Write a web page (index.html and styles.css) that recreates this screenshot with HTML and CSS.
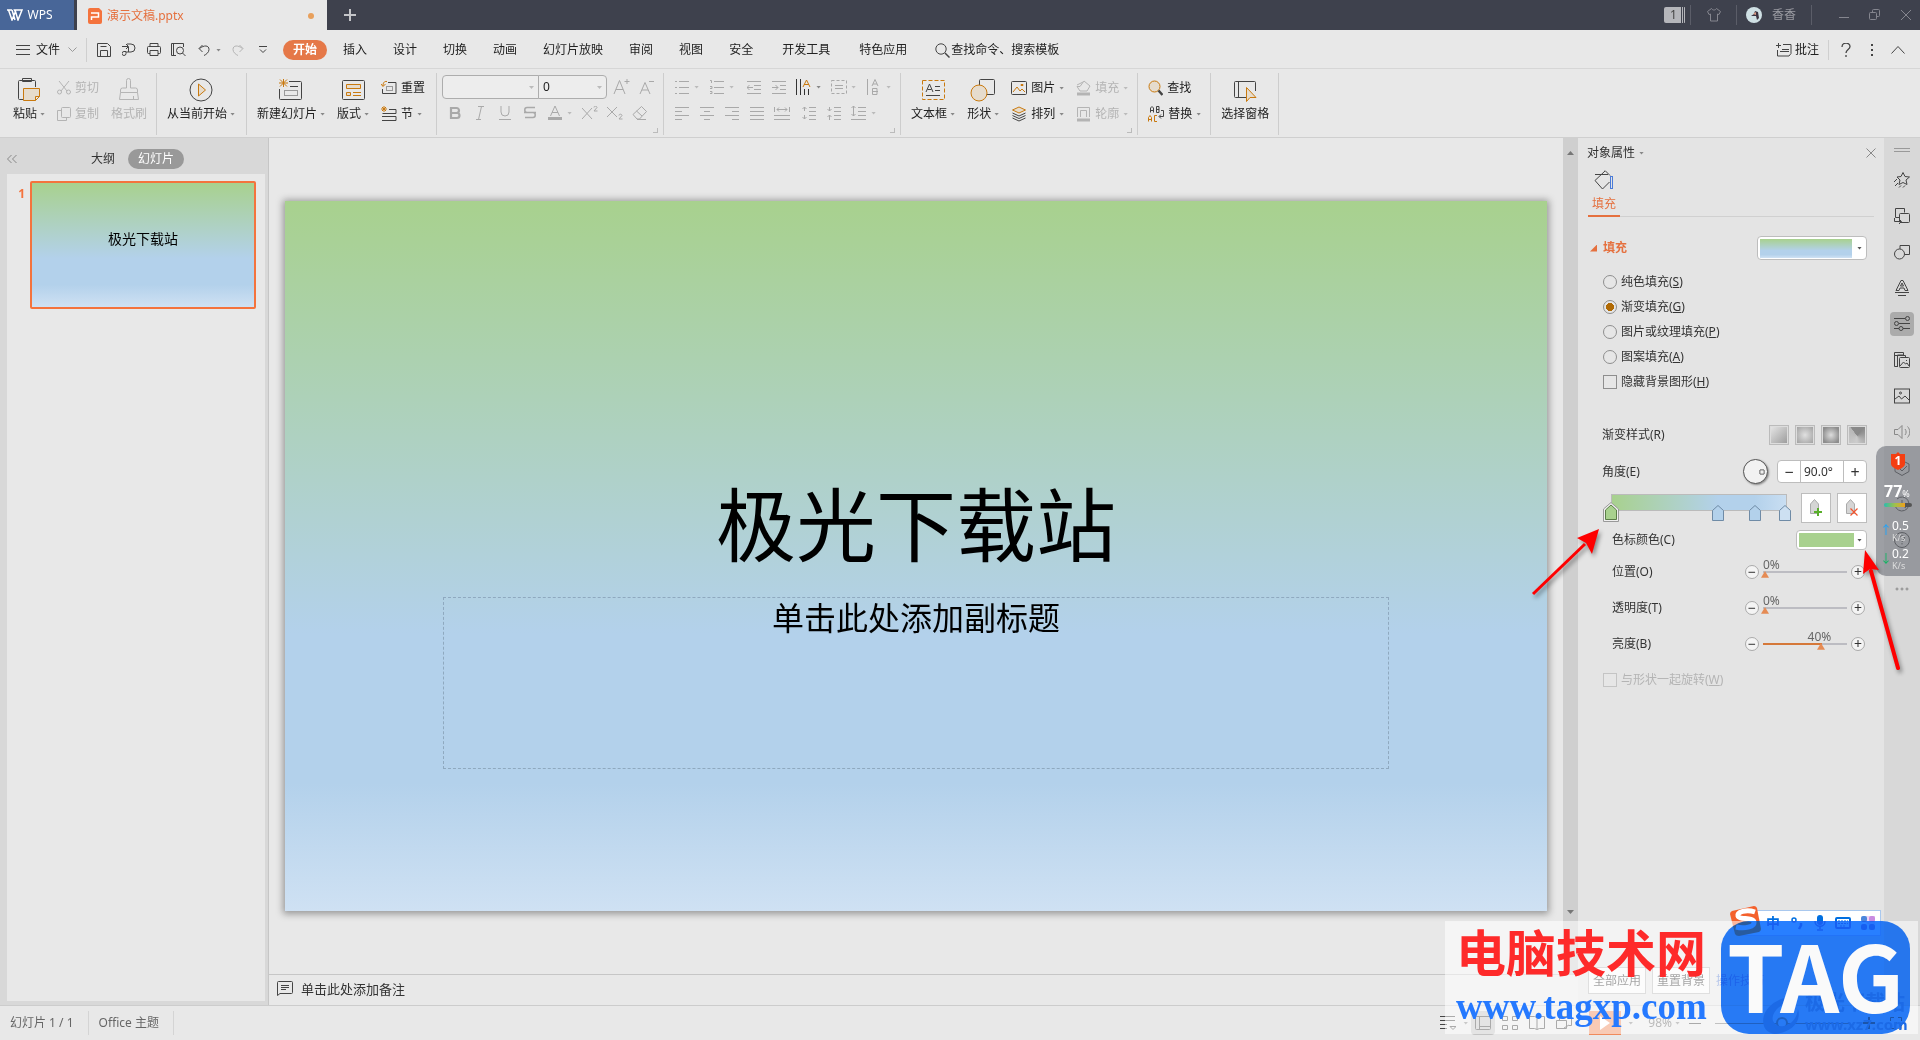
FILE: index.html
```html
<!DOCTYPE html>
<html lang="zh-CN">
<head>
  <meta charset="UTF-8">
  <meta name="viewport" content="width=device-width, initial-scale=1.0">
  <title>演示文稿.pptx - WPS</title>
  <link rel="stylesheet" href="styles.css">
</head>
<body>

  <!-- Title bar -->
  <header class="titlebar">
    <button class="wps-tab">
      <svg width="16" height="12" viewBox="0 0 16 12"><path d="M0 1h5M1.500 1l3.500 10L8.500 2.500 11 11l4-10h-7.500l1 2M5 1l3 10" stroke="#fff" stroke-width="1.500"/></svg>
      WPS
    </button>
    <div class="doc-tab">
      <svg width="14" height="16" viewBox="0 0 14 16"><path d="M2 0h9l3 3v11a2 2 0 0 1-2 2H2a2 2 0 0 1-2-2V2a2 2 0 0 1 2-2z" fill="#f4733d"/><path d="M3 5h7.500v4H3.500v3" stroke="#fff" stroke-width="1.500"/></svg>
      <span>演示文稿.pptx</span>
      <i class="unsaved"></i>
    </div>
    <button class="new-tab" aria-label="新建"><svg width="12" height="12" viewBox="0 0 12 12"><path d="M6 0v12M0 6h12" stroke="#c4c5c9" stroke-width="2"/></svg></button>
    <div class="title-tools">
      <span class="badge">1</span>
      <span class="t-sep"></span>
      <button aria-label="皮肤"><svg width="14" height="14" viewBox="0 0 14 14"><path d="M4.500.500L.500 3.500l1.500 3 1.500-.5v7h7V6l1.500.500 1.500-3-4-3c-1 2-4 2-5 0z"/></svg></button>
      <span class="t-sep"></span>
      <button class="user">
        <svg width="16" height="16" viewBox="0 0 16 16"><circle cx="8" cy="8" r="8" fill="#cfe0e4"/><path d="M9 4l3 1 1 6-2 2-1-4-5 0 3-2z" fill="#3b3340"/><path d="M7 7l3-2v3z" fill="#d99a84"/></svg>
        香香
      </button>
      <span class="t-sep"></span>
      <button class="win" aria-label="最小化"><svg width="12" height="12" viewBox="0 0 12 12"><path d="M1 8.500h10"/></svg></button>
      <button class="win" aria-label="还原"><svg width="12" height="12" viewBox="0 0 12 12"><rect x=".5" y="3.500" width="7" height="7" rx="1"/><path d="M3.500 3V1.500a1 1 0 0 1 1-1h5a1 1 0 0 1 1 1v5a1 1 0 0 1-1 1H8"/></svg></button>
      <button class="win" aria-label="关闭"><svg width="12" height="12" viewBox="0 0 12 12"><path d="M1 1l10 10M11 1L1 11"/></svg></button>
    </div>
  </header>

  <!-- Menu -->
  <nav class="menubar">
    <button class="file-btn">
      <svg width="14" height="10" viewBox="0 0 14 10"><path d="M0 .5h14M0 4.500h14M0 9.500h14"/></svg>
      文件
      <svg class="chev" width="9" height="6" viewBox="0 0 9 6"><path d="M.5.500l4 4 4-4"/></svg>
    </button>
    <span class="m-sep"></span>
    <div class="quick">
      <button aria-label="保存"><svg width="14" height="14" viewBox="0 0 14 14"><path d="M.5.500h10l3 3v10H.500zM3.500 13V7.500h7V13M3.500 3.500h6"/></svg></button>
      <button aria-label="输出"><svg width="14" height="14" viewBox="0 0 14 14"><path d="M0 3.500h6M4 1l2.500 2.500L4 6M5 1h4a4 4 0 0 1 0 8H4v1.500a2 2 0 1 1-2-2h2M6.500 4v5"/></svg></button>
      <button aria-label="打印"><svg width="14" height="14" viewBox="0 0 14 14"><path d="M3 3.500v-3h8v3M3 10.500H1.500a1 1 0 0 1-1-1v-5a1 1 0 0 1 1-1h11a1 1 0 0 1 1 1v5a1 1 0 0 1-1 1H11M3 7.500h8v5H3z"/></svg></button>
      <button aria-label="打印预览"><svg width="15" height="14" viewBox="0 0 15 14"><path d="M5 12.500H.500V.500h12V4M2.500.500v12"/><circle cx="9" cy="7.500" r="3.500"/><path d="M11.500 10l3 3"/></svg></button>
      <button aria-label="撤消"><svg width="12" height="12" viewBox="0 0 12 12"><path d="M4.500 1L1 4.500 4.500 8M1.500 4.500C6 1 11 1 11 5.500c0 3-3 5-5 6"/></svg></button>
      <i class="caret"></i>
      <button class="off" aria-label="恢复"><svg width="12" height="12" viewBox="0 0 12 12"><path d="M7.500 1L11 4.500 7.500 8M10.500 4.500C6 1 1 1 1 5.500c0 3 3 5 5 6"/></svg></button>
      <button aria-label="更多"><svg width="8" height="8" viewBox="0 0 8 8"><path d="M0 .5h8M1 3.500l3 3 3-3"/></svg></button>
    </div>
    <div class="tabs">
      <button class="active">开始</button>
      <button>插入</button>
      <button>设计</button>
      <button>切换</button>
      <button>动画</button>
      <button>幻灯片放映</button>
      <button>审阅</button>
      <button>视图</button>
      <button>安全</button>
      <button class="wide">开发工具</button>
      <button class="wide">特色应用</button>
    </div>
    <button class="search"><svg width="15" height="15" viewBox="0 0 15 15"><circle cx="6" cy="6" r="5.200"/><path d="M10 10l4.500 4.500" stroke-width="1.500"/></svg>查找命令、搜索模板</button>
    <div class="menu-right">
      <button class="comment"><svg width="16" height="14" viewBox="0 0 16 14"><path d="M2.500 0v5M0 2.500h5M7 1.500h8v9l-2 2.500H1.500V7M4 8.500h9M6 6.500h7"/></svg>批注</button>
      <span class="m-sep short"></span>
      <button aria-label="帮助"><svg width="10" height="14" viewBox="0 0 10 14"><path d="M1 4c0-5 8-5 8-.5C9 6.500 5 6.500 5 10M5 12v2" stroke-width="1.300"/></svg></button>
      <button aria-label="更多"><svg width="2" height="12" viewBox="0 0 2 12"><path d="M1 0v2M1 5v2M1 10v2" stroke-width="2"/></svg></button>
      <button aria-label="折叠"><svg width="14" height="8" viewBox="0 0 14 8"><path d="M.5 7.500l6.500-7 6.500 7"/></svg></button>
    </div>
  </nav>

  <!-- Ribbon -->
  <section class="ribbon">
    <div class="group first">
      <button class="big">
        <svg width="24" height="24" viewBox="0 0 24 24"><path d="M7 21.500H2.500a1 1 0 0 1-1-1v-17a1 1 0 0 1 1-1h15a1 1 0 0 1 1 1V9M5.500.500h9v3h-9z"/><path class="o" d="M6.500 10.500h16v8l-4 4h-12zM22.500 18.500h-4v4"/></svg>
        <span>粘贴<i class="caret"></i></span>
      </button>
      <div class="stack">
        <button class="off"><svg width="14" height="14" viewBox="0 0 14 14"><path d="M2 0l8 10M12 0L4 10"/><circle cx="2.500" cy="11" r="2"/><circle cx="11.500" cy="11" r="2"/></svg>剪切</button>
        <button class="off"><svg width="14" height="14" viewBox="0 0 14 14"><path d="M9.500 10.500v3h-9v-10H4"/><rect x="4.500" y=".5" width="9" height="10" rx="1"/></svg>复制</button>
      </div>
      <button class="big off">
        <svg width="24" height="24" viewBox="0 0 24 24"><path d="M9.500 10V2.500a2 2 0 0 1 4 0V10h5a2 2 0 0 1 2 2v2.500h-17V12a2 2 0 0 1 2-2zM3.500 14.500l-1 7h19l-1-7M16.500 18v3"/></svg>
        <span>格式刷</span>
      </button>
    </div>
    <div class="group roomy">
      <button class="big">
        <svg width="24" height="24" viewBox="0 0 24 24"><circle cx="12" cy="12" r="11"/><path class="o" d="M9.500 6v12l7-6z"/></svg>
        <span>从当前开始<i class="caret"></i></span>
      </button>
    </div>
    <div class="group roomy">
      <button class="big">
        <svg width="26" height="24" viewBox="0 0 26 24"><path d="M11 3.500h11.500a1 1 0 0 1 1 1v16a1 1 0 0 1-1 1h-20a1 1 0 0 1-1-1V11M12 8.500h8"/><rect class="g" x="6.500" y="12.500" width="13" height="5"/><path class="l" d="M5.500 1v8M1 5h9M2 1.500l7 7M9 1.500l-7 7"/></svg>
        <span>新建幻灯片<i class="caret"></i></span>
      </button>
      <button class="big">
        <svg width="24" height="24" viewBox="0 0 24 24"><rect x="1.500" y="2.500" width="22" height="19" rx="1"/><path class="o" d="M5.500 6.500h14v4h-14zM5.500 14.500h4v3h-4z"/><path class="l" d="M12 14.500h8M12 17.500h8"/></svg>
        <span>版式<i class="caret"></i></span>
      </button>
      <div class="stack">
        <button><svg width="16" height="16" viewBox="0 0 16 16"><path d="M7 2.500h8v11H1.500V9"/><rect class="g" x="5.500" y="6.500" width="6" height="4"/><path class="l" d="M6 1.500C3 1 2 3 2 6M0 4l2 2.500L4.500 4"/></svg>重置</button>
        <button><svg width="16" height="16" viewBox="0 0 16 16"><path d="M8 3.500h7v4H1.500M1 10.500h14v4H1"/><path class="l" d="M3 0v6M0 3h6M1 1l4 4M5 1L1 5"/></svg>节<i class="caret far"></i></button>
      </div>
    </div>
    <div class="group font-group">
      <div class="tool-row">
        <select class="font-name" aria-label="字体"><option></option></select>
        <select class="font-size" aria-label="字号"><option>0</option></select>
        <button class="t-btn" aria-label="增大字号"><svg width="17" height="16" viewBox="0 0 17 16"><path d="M1 15L6.500 1.500 12 15M3 10.500h7M14 0v5M11.500 2.500h5"/></svg></button>
        <button class="t-btn" aria-label="减小字号"><svg width="17" height="16" viewBox="0 0 17 16"><path d="M2 15L7 3.500 12 15M4 11h6M11 2.500h5"/></svg></button>
      </div>
      <div class="tool-row">
        <button class="t-btn" aria-label="加粗"><svg width="12" height="14" viewBox="0 0 12 14"><path d="M2 2h5.500a2 2 0 0 1 0 5H2zM2 7h6a2.200 2.200 0 0 1 0 5H2z" stroke-width="2.200"/></svg></button>
        <button class="t-btn" aria-label="倾斜"><svg width="10" height="14" viewBox="0 0 10 14"><path d="M3 .5h6M1 13.500h5M6.500.500l-3 13"/></svg></button>
        <button class="t-btn" aria-label="下划线"><svg width="12" height="14" viewBox="0 0 12 14"><path d="M2 0v6a4 4 0 0 0 8 0V0M0 13.500h12"/></svg></button>
        <button class="t-btn" aria-label="删除线"><svg width="12" height="14" viewBox="0 0 12 14"><path d="M11 1.500H3C0 1.500 0 6.500 3 6.500h6c3 0 3 5 0 5H1M0 6.500h12" stroke-width="1.500"/></svg></button>
        <button class="t-btn" aria-label="字体颜色"><svg width="14" height="14" viewBox="0 0 14 14"><path d="M2.500 10L7 0l4.500 10M4 6.500h6"/><path d="M0 12.500h14" stroke-width="3"/></svg></button>
        <i class="caret pale"></i>
        <button class="t-btn" aria-label="上标"><svg width="16" height="14" viewBox="0 0 16 14"><path d="M0 2l10 11M10 2L0 13M12 1.500c0-2 3-1.500 3 0L12 5h3.500"/></svg></button>
        <button class="t-btn" aria-label="下标"><svg width="16" height="14" viewBox="0 0 16 14"><path d="M0 1l10 10M10 1L0 11M12 9.500c0-2 3-1.500 3 0L12 13h3.500"/></svg></button>
        <button class="t-btn" aria-label="清除格式"><svg width="16" height="14" viewBox="0 0 16 14"><path d="M1 8.500L9.500.500l5 5-7 7.500H5zM4.500 5l5.500 5M5 13.500h9"/></svg></button>
      </div>
      <i class="corner"></i>
    </div>
    <div class="group para-group">
      <div class="tool-row">
        <button class="t-btn" aria-label="项目符号"><svg width="14" height="14" viewBox="0 0 14 14"><path d="M4 1.500h10M4 7.500h10M4 13.500h10M0 1.500h2M0 7.500h2M0 13.500h2"/></svg></button><i class="caret pale"></i>
        <button class="t-btn" aria-label="编号"><svg width="14" height="14" viewBox="0 0 14 14"><path d="M4 1.500h10M4 7.500h10M4 13.500h10M0 .5h1.500V3M0 6.500h2v2H0M0 11.500h2v2H0"/></svg></button><i class="caret pale"></i>
        <button class="t-btn apart" aria-label="减少缩进"><svg width="14" height="14" viewBox="0 0 14 14"><path d="M0 1.500h14M7 5.500h7M7 9.500h7M0 13.500h14M0 7.500h6M2.500 5L0 7.500 2.500 10"/></svg></button>
        <button class="t-btn" aria-label="增加缩进"><svg width="14" height="14" viewBox="0 0 14 14"><path d="M0 1.500h14M8 5.500h6M8 9.500h6M0 13.500h14M0 7.500h6M3.500 5L6 7.500 3.500 10"/></svg></button>
        <button class="t-btn dark" aria-label="文字方向"><svg width="15" height="16" viewBox="0 0 15 16"><path d="M.5 0v16M4.500 0v16M8.500 10v6M12.500 10v6"/><path class="l" d="M7 8l3.500-7L14 8M8 5.500h5"/></svg></button><i class="caret"></i>
        <button class="t-btn" aria-label="对齐文本"><svg width="16" height="14" viewBox="0 0 16 14"><rect x=".5" y=".5" width="15" height="13" stroke-dasharray="3 2"/><path d="M4 5.500h8M4 8.500h8"/></svg></button><i class="caret pale"></i>
        <button class="t-btn" aria-label="分散文本"><svg width="13" height="16" viewBox="0 0 13 16"><path d="M.5 0v16M5 7l3-6.500L11 7M6 5h4M5.500 9.500H10v6H5.500zM5.500 12.500H11"/></svg></button><i class="caret pale"></i>
      </div>
      <div class="tool-row">
        <button class="t-btn" aria-label="左对齐"><svg width="14" height="14" viewBox="0 0 14 14"><path d="M0 1.500h14M0 5.500h7M0 9.500h14M0 13.500h7"/></svg></button>
        <button class="t-btn" aria-label="居中"><svg width="14" height="14" viewBox="0 0 14 14"><path d="M0 1.500h14M4 5.500h6M0 9.500h14M4 13.500h6"/></svg></button>
        <button class="t-btn" aria-label="右对齐"><svg width="14" height="14" viewBox="0 0 14 14"><path d="M0 1.500h14M7 5.500h7M0 9.500h14M7 13.500h7"/></svg></button>
        <button class="t-btn" aria-label="两端对齐"><svg width="14" height="14" viewBox="0 0 14 14"><path d="M0 1.500h14M0 5.500h14M0 9.500h14M0 13.500h14"/></svg></button>
        <button class="t-btn" aria-label="分散对齐"><svg width="16" height="14" viewBox="0 0 16 14"><path d="M.5 1v5M15.500 1v5M3 3.500h10M5 1.500l-2 2 2 2M11 1.500l2 2-2 2M0 9.500h16M0 13.500h16"/></svg></button>
        <button class="t-btn apart" aria-label="增加行距"><svg width="14" height="14" viewBox="0 0 14 14"><path d="M7 1.500h7M7 5.500h7M7 9.500h7M7 13.500h7M2.500 1v4M.5 3l2-2 2 2M2.500 9v4M.5 11l2 2 2-2"/></svg></button>
        <button class="t-btn" aria-label="减少行距"><svg width="14" height="14" viewBox="0 0 14 14"><path d="M7 1.500h7M7 5.500h7M7 9.500h7M7 13.500h7M2.500 1v4M.5 3l2 2 2-2M2.500 9v5M.5 11l2-2 2 2"/></svg></button>
        <button class="t-btn" aria-label="行距"><svg width="15" height="14" viewBox="0 0 15 14"><path d="M7 1.500h8M7 5.500h8M7 9.500h8M0 13.500h15M2.500 0v10M.5 2l2-2 2 2M.5 8l2 2 2-2"/></svg></button>
        <i class="caret pale"></i>
      </div>
      <i class="corner"></i>
    </div>
    <div class="group">
      <button class="big">
        <svg width="24" height="24" viewBox="0 0 24 24"><rect class="l" x="1.500" y="2.500" width="22" height="19" stroke-dasharray="4 2"/><path d="M5 14l3.500-8L12 14M6.500 11.500h4M14 8.500h5M14 12.500h5M5 17.500h14"/></svg>
        <span>文本框<i class="caret"></i></span>
      </button>
      <button class="big">
        <svg width="26" height="24" viewBox="0 0 26 24"><rect x="9.500" y="1.500" width="15" height="15" rx="1"/><circle class="o" cx="9" cy="15" r="8"/></svg>
        <span>形状<i class="caret"></i></span>
      </button>
      <div class="stack">
        <button><svg width="16" height="14" viewBox="0 0 16 14"><rect x=".5" y=".5" width="15" height="13" rx="1"/><path class="l" d="M2 11l4-5 3 4 2-2 3 3M10 4.500h2v-1h-2z"/></svg>图片<i class="caret"></i></button>
        <button><svg width="16" height="16" viewBox="0 0 16 16"><path d="M1.500 7L8 10l6.500-3M1.500 9.500L8 12.500l6.500-3M1.500 12L8 15l6.500-3"/><path class="o" d="M8 1L1.500 4 8 7l6.500-3z"/></svg>排列<i class="caret"></i></button>
      </div>
      <div class="stack">
        <button class="off"><svg width="15" height="16" viewBox="0 0 15 16"><path d="M8 1l6 5-3 5H4L1 6.500h3L8 1M1 5l6-3"/><path d="M1 14h13" stroke-width="3"/></svg>填充<i class="caret pale"></i></button>
        <button class="off"><svg width="15" height="16" viewBox="0 0 15 16"><path d="M1.500 11V1.500h12V11M4.500 11V4.500h6V11"/><path d="M1 14h13" stroke-width="3"/></svg>轮廓<i class="caret pale"></i></button>
      </div>
      <i class="corner"></i>
    </div>
    <div class="group">
      <div class="stack">
        <button><svg width="15" height="16" viewBox="0 0 15 16"><circle class="o" cx="6.500" cy="6.500" r="5.500"/><path d="M10.500 10.500l4 4.500" stroke-width="2.500"/></svg>查找</button>
        <button><svg width="16" height="16" viewBox="0 0 16 16"><path d="M2.500 6.500V2l1.500-1.500L5.500 2v4.500M2.500 4.500h3M8.500.500v6H11v-6zM8.500 3.500H11M13 4.500h2.500v6h-4M13 8.500l-2 2 2 2"/><path class="l" d="M.5 15.500v-4L2 9.500l1.500 2v4M.5 13.500h3M9 9.500H6.500v6H9"/></svg>替换<i class="caret"></i></button>
      </div>
    </div>
    <div class="group">
      <button class="big">
        <svg width="24" height="24" viewBox="0 0 24 24"><path d="M13 19.500H2.500a1 1 0 0 1-1-1v-14a1 1 0 0 1 1-1h19a1 1 0 0 1 1 1V13M5.500 4v15"/><path class="o" d="M13.500 9.500v14l3.500-4h6z"/></svg>
        <span>选择窗格</span>
      </button>
    </div>
  </section>

  <main class="workspace">
    <!-- Slide list -->
    <aside class="slides">
      <div class="slides-head">
        <button class="collapse" aria-label="收起"><svg width="10" height="10" viewBox="0 0 10 10"><path d="M4.500 1l-4 4 4 4M9.500 1l-4 4 4 4"/></svg></button>
        <button>大纲</button>
        <button class="current">幻灯片</button>
      </div>
      <ol class="slide-list">
        <li><b>1</b><div class="thumb gradient">极光下载站</div></li>
      </ol>
    </aside>

    <section class="editor">
      <div class="stage-row">
        <div class="stage">
          <article class="slide gradient">
            <h1>极光下载站</h1>
            <p>单击此处添加副标题</p>
          </article>
        </div>
        <div class="scrollbar"><i class="up"></i><i class="down"></i></div>
      </div>
      <div class="notes">
        <svg width="16" height="15" viewBox="0 0 16 15"><path d="M1.500.500h13a1 1 0 0 1 1 1v10a1 1 0 0 1-1 1H3l-2.500 2v-13a1 1 0 0 1 1-1zM4 4.500h8M4 6.500h8M4 8.500h5"/></svg>
        单击此处添加备注
      </div>
    </section>

    <!-- Object properties -->
    <aside class="props">
      <div class="props-head">
        <span>对象属性<i class="caret"></i></span>
        <button aria-label="关闭"><svg width="10" height="10" viewBox="0 0 10 10"><path d="M.5.500l9 9M9.500.500l-9 9"/></svg></button>
      </div>
      <div class="props-tabs">
        <button>
          <svg width="20" height="20" viewBox="0 0 20 20"><path d="M1 4.500h13M11 1L1 10.500 8.500 19l7-7M11 .5l5 5"/><rect x="16.500" y="6.500" width="2" height="12" stroke="#4a7bd8"/></svg>
          填充
        </button>
      </div>
      <div class="props-body">
        <div class="row head-row">
          <h2><i></i>填充</h2>
          <button class="swatch preset" aria-label="填充预设"><span class="gradient"></span><i class="caret"></i></button>
        </div>
        <div class="choices">
          <label><input type="radio" name="fill">纯色填充(<u>S</u>)</label>
          <label><input type="radio" name="fill" checked>渐变填充(<u>G</u>)</label>
          <label><input type="radio" name="fill">图片或纹理填充(<u>P</u>)</label>
          <label><input type="radio" name="fill">图案填充(<u>A</u>)</label>
          <label><input type="checkbox">隐藏背景图形(<u>H</u>)</label>
        </div>
        <div class="row style-row">
          <span>渐变样式(R)</span>
          <div class="styles">
            <button class="linear" aria-label="线性"></button>
            <button class="radial" aria-label="射线"></button>
            <button class="rect" aria-label="矩形"></button>
            <button class="path" aria-label="路径"></button>
          </div>
        </div>
        <div class="row angle-row">
          <label for="angle">角度(E)</label>
          <div class="angle">
            <span class="dial"></span>
            <div class="spin">
              <button aria-label="减小">−</button>
              <input id="angle" type="text" value="90.0°">
              <button aria-label="增大">+</button>
            </div>
          </div>
        </div>
        <div class="row stops-row">
          <div class="stops">
            <div class="bar"></div>
            <svg class="stop on" style="left: 0%" width="16" height="20" viewBox="0 0 16 20"><path d="M.5 19.500V7L8 .500 15.500 7v12.500z" fill="#f0f0f0" stroke="#999"/><path d="M2.500 17.500V8L8 3l5.500 5v9.500z" fill="#a8d18e" stroke="#5b7d48"/></svg>
            <svg class="stop" style="left: 61%" width="12" height="16" viewBox="0 0 12 16"><path d="M.5 15.500V5.500L6 .5l5.500 5v10z" fill="#b3d1eb" stroke="#6f8ba6"/></svg>
            <svg class="stop" style="left: 82%" width="12" height="16" viewBox="0 0 12 16"><path d="M.5 15.500V5.500L6 .5l5.500 5v10z" fill="#b3d1eb" stroke="#6f8ba6"/></svg>
            <svg class="stop" style="left: 99%" width="12" height="16" viewBox="0 0 12 16"><path d="M.5 15.500V5.500L6 .5l5.500 5v10z" fill="#cde0f2" stroke="#6f8ba6"/></svg>
          </div>
          <button class="stop-btn" aria-label="添加色标"><svg width="16" height="20" viewBox="0 0 16 20"><path d="M2.500 15.500V6L6.500 1.500l4 4.500v9.500z" fill="#d5d5d5" stroke="#aaa"/><path d="M10 10v8M6 14h8" stroke="#5aae2c" stroke-width="2"/></svg></button>
          <button class="stop-btn" aria-label="删除色标"><svg width="16" height="20" viewBox="0 0 16 20"><path d="M2.500 15.500V6L6.500 1.500l4 4.500v9.500z" fill="#d5d5d5" stroke="#aaa"/><path d="M6.500 10.500l7 7M13.500 10.500l-7 7" stroke="#f2542d" stroke-width="1.200"/></svg></button>
        </div>
        <div class="row sub color-row">
          <span>色标颜色(C)</span>
          <button class="swatch color" aria-label="色标颜色"><span></span><i class="caret"></i></button>
        </div>
        <div class="row sub slide-row">
          <label for="pos">位置(O)</label>
          <div class="slider">
            <button aria-label="减小">−</button>
            <div class="track"><output style="margin-left: 0%">0%</output><input id="pos" type="range" min="0" max="100" value="0"></div>
            <button aria-label="增大">+</button>
          </div>
        </div>
        <div class="row sub slide-row">
          <label for="alpha">透明度(T)</label>
          <div class="slider">
            <button aria-label="减小">−</button>
            <div class="track"><output style="margin-left: 0%">0%</output><input id="alpha" type="range" min="0" max="100" value="0"></div>
            <button aria-label="增大">+</button>
          </div>
        </div>
        <div class="row sub slide-row">
          <label for="light">亮度(B)</label>
          <div class="slider">
            <button aria-label="减小">−</button>
            <div class="track filled"><output style="margin-left: 53%">40%</output><input id="light" type="range" min="-100" max="100" value="40"></div>
            <button aria-label="增大">+</button>
          </div>
        </div>
        <div class="choices rotate">
          <label class="off"><input type="checkbox" disabled>与形状一起旋转(<u>W</u>)</label>
        </div>
      </div>
      <div class="props-foot">
        <button>全部应用</button>
        <button>重置背景</button>
        <a href="#">操作技巧</a>
      </div>
    </aside>

    <!-- Side strip -->
    <nav class="strip">
      <svg class="grip" width="16" height="4" viewBox="0 0 16 4"><path d="M0 .5h16M0 3.500h16"/></svg>
      <button aria-label="动画"><svg width="16" height="16" viewBox="0 0 16 16"><path d="M9 .5l2 4 4.500.500-3.500 3 1 4.500L9 10.500 5 12.500 6 8 3 5l4-.5zM0 10l3-3M1 14l3-3M5 15.500l2-2M9 15.500l2-2"/></svg></button>
      <button aria-label="切换"><svg width="16" height="16" viewBox="0 0 16 16"><path d="M5 9.500H1.500v-9h9v4"/><rect x="5.500" y="5.500" width="10" height="9" rx="1"/><path d="M.5 10v3.500H7M5 11l2.500 2.500L5 16"/></svg></button>
      <button aria-label="形状"><svg width="16" height="16" viewBox="0 0 16 16"><path d="M6 5V1.500h9.500v9H11"/><circle cx="5.500" cy="10" r="5"/></svg></button>
      <button aria-label="艺术字"><svg width="16" height="16" viewBox="0 0 16 16"><path d="M2 10.500L7 .5h2l5 10h-3L10 8H6l-1 2.500zM6.500 6L8 3l1.500 3zM1 12.500h14M4 15.500h8"/></svg></button>
      <button class="on" aria-label="属性"><svg width="16" height="16" viewBox="0 0 16 16"><path d="M0 2.500h11M5 7.500h11M0 12.500h5M9 12.500h7"/><circle cx="13.500" cy="2.500" r="2"/><circle cx="2.500" cy="7.500" r="2"/><circle cx="7" cy="12.500" r="2"/></svg></button>
      <button aria-label="模板"><svg width="16" height="16" viewBox="0 0 16 16"><path d="M4 14.500H.500V.500h9V3H3.500M.5 3.500h11V5M3.500 4v10"/><rect x="5.500" y="5.500" width="10" height="10" rx="1"/><path d="M6 14l3.500-4 2 2 1.500-1 2 3M12 8.500h1"/></svg></button>
      <button aria-label="图片"><svg width="16" height="16" viewBox="0 0 16 16"><rect x=".5" y="1" width="15" height="14"/><path d="M1 11l4-3 2.500 3L11 8l4 4"/><circle cx="6.500" cy="5" r="1"/></svg></button>
      <button class="soft" aria-label="音频"><svg width="16" height="16" viewBox="0 0 16 16"><path d="M.5 5.500H4l4-4v13l-4-4H.500zM11 5c1.500 2 1.500 4 0 6M13.500 2.500c3 3 3 8 0 11"/></svg></button>
      <button aria-label="安全"><svg width="16" height="16" viewBox="0 0 16 16"><path d="M8 .5l7 3.500v7.500L8 15.500 1 11.500V4zM4 7l4 4 5-5"/></svg></button>
      <button aria-label="历史"><svg width="16" height="16" viewBox="0 0 16 16"><path d="M1 9a7 7 0 1 0 2-6M8 4v5l4 3M0 7l1.500 2.500L4 7"/></svg></button>
      <button aria-label="帮助"><svg width="16" height="16" viewBox="0 0 16 16"><circle cx="8" cy="8" r="7.500"/><path d="M5.500 6c0-3 5-3 5 0 0 2-2.500 2-2.500 4M8 11v1.500"/></svg></button>
      <button class="soft last" aria-label="更多"><svg width="14" height="4" viewBox="0 0 14 4"><circle cx="2" cy="2" r="1"/><circle cx="7" cy="2" r="1"/><circle cx="12" cy="2" r="1"/></svg></button>
    </nav>
  </main>

  <!-- Status bar -->
  <footer class="status">
    <span class="cell">幻灯片 1 / 1</span>
    <span class="cell">Office 主题</span>
    <div class="views">
      <button aria-label="备注"><svg width="16" height="14" viewBox="0 0 16 14"><path d="M0 .5h15M0 4.500h15M0 8.500h7M0 12.500h7M10 10.500h6l-3 3z"/></svg></button>
      <i class="caret"></i>
      <button class="on" aria-label="普通视图"><svg width="16" height="14" viewBox="0 0 16 14"><rect x=".5" y=".5" width="15" height="13" rx="1"/><path d="M4.500 1v12M5 10.500h10"/></svg></button>
      <button aria-label="幻灯片浏览"><svg width="16" height="14" viewBox="0 0 16 14"><path d="M.5.500h5v4h-5zM10.500.500h5v4h-5zM.5 9.500h5v4h-5zM10.500 9.500h5v4h-5z"/></svg></button>
      <button aria-label="阅读视图"><svg width="16" height="14" viewBox="0 0 16 14"><path d="M.5.500h5l2.500 1 2.500-1h5v12h-5L8 13.500l-2.500-1h-5zM8 1.500v12"/></svg></button>
      <button aria-label="讲义"><svg width="16" height="14" viewBox="0 0 16 14"><path d="M3.500 4V.500h12v9H13M.5 4.500h10v8H.500zM8 12l5-3"/></svg></button>
      <button class="play" aria-label="放映"><svg width="12" height="14" viewBox="0 0 12 14"><path d="M1 0v14l10-7z"/></svg></button>
      <i class="caret"></i>
      <span class="zoom">98%</span>
      <i class="caret"></i>
      <button aria-label="缩小"><svg width="12" height="12" viewBox="0 0 12 12"><path d="M0 6.500h12"/></svg></button>
      <input class="zoom-range" type="range" min="0" max="100" value="50" aria-label="缩放">
      <button aria-label="放大"><svg width="12" height="12" viewBox="0 0 12 12"><path d="M0 6h12M6 0v12" stroke-width="2"/></svg></button>
      <button aria-label="适应窗口"><svg width="12" height="12" viewBox="0 0 12 12"><path d="M.5 4V.500H4M8 .5h3.500V4M11.500 8v3.500H8M4 11.500H.500V8M5 6h2"/></svg></button>
    </div>
  </footer>

  <!-- Input method bar -->
  <div class="ime">
    <svg class="logo" width="32" height="32" viewBox="0 0 32 32"><path d="M3 6L25 1q2 0 3 2l4 21q0 2-2 3L10 31q-3 0-4-2L1 9q0-2 2-3z" fill="#f4612c"/><path d="M26 7c-9-3-18 0-17 4s15 1 16 6-10 7-18 5" stroke="#fff" stroke-width="5"/></svg>
    <span>中</span>
    <svg width="14" height="14" viewBox="0 0 14 14"><circle cx="4" cy="4" r="2" stroke="#006fe0" stroke-width="1.500"/><path d="M11 7v2.500L9 13" stroke="#006fe0" stroke-width="2.500"/></svg>
    <svg width="12" height="16" viewBox="0 0 12 16"><rect x="3" width="6" height="10" rx="3" fill="#006fe0"/><path d="M1 6c0 7 10 7 10 0M6 11v3M3 15h6" stroke="#006fe0" stroke-width="1.500"/></svg>
    <svg width="16" height="12" viewBox="0 0 16 12"><rect x="1" y="1" width="14" height="10" rx="1" stroke="#006fe0" stroke-width="2"/><path d="M3 4h10M3 6.500h10M5 9h6" stroke="#006fe0" stroke-dasharray="2 1"/></svg>
    <svg width="14" height="14" viewBox="0 0 14 14"><circle cx="10" cy="3" r="6" fill="#edd5f6"/><rect width="6" height="6" rx="2" fill="#4c86dc"/><rect x="8" width="6" height="6" rx="2" fill="#c98be0"/><rect y="8" width="6" height="6" rx="2" fill="#006fe0"/><rect x="8" y="8" width="6" height="6" rx="2" fill="#006fe0"/></svg>
  </div>

  <!-- System monitor -->
  <div class="monitor">
    <svg class="shield" width="14" height="18" viewBox="0 0 14 18"><path d="M7 0l2 2h5v10q0 3-7 6-7-3-7-6V2h5z" fill="#f43e12"/></svg>
    <b class="count">1</b>
    <div class="load"><b>77</b>%</div>
    <div class="load-bar"></div>
    <div class="net up"><b>0.5</b><span>K/s</span></div>
    <div class="net down"><b>0.2</b><span>K/s</span></div>
  </div>

  <svg class="arrow left" width="76" height="76" viewBox="0 0 76 76"><path d="M4 69L56 19" stroke="#fe0000" stroke-width="3"/><path d="M70 4L48 13l9 5 6 11z" fill="#fe0000"/></svg>
  <svg class="arrow right" width="48" height="128" viewBox="0 0 48 128"><path d="M13 24l27 97" stroke="#fe0000" stroke-width="4" stroke-linecap="round"/><path d="M7 3l-2 24 7-5 9 1z" fill="#fe0000"/></svg>

  <!-- Site banner -->
  <div class="banner">
    <div class="banner-text">
      <strong>电脑技术网</strong>
      <span>www.tagxp.com</span>
    </div>
    <div class="tag">
      <div class="ghost">
        <svg width="44" height="40" viewBox="0 0 44 40"><path d="M3 32C-2 16 16 1 42 1 22 7 9 18 12 27c2 4 6 6 11 5 8-2 13-8 14-17 4 14-8 24-24 25l14 0C14 42 5 39 3 32z" fill="#1c6ae6"/></svg>
        <p>极光下载站<br><small>www.xz7.com</small></p>
      </div>
      <b>TAG</b>
    </div>
  </div>

</body>
</html>
```
FILE: styles.css
```css
* {
  box-sizing: border-box;
}

body {
  font-family: "Noto Sans", "Noto Sans CJK SC", sans-serif;
  font-size: 12px;
  line-height: 18px;
  color: #333;
  margin: 0;
  height: 100vh;
  display: flex;
  flex-direction: column;
  background: #e8e8e8;
  position: relative;
  overflow: hidden;
}

button, input, select {
  font: inherit;
  color: inherit;
}

button {
  display: flex;
  align-items: center;
  justify-content: center;
  background: none;
  border: none;
  padding: 0;
  white-space: nowrap;
}

svg {
  fill: none;
  stroke: #444;
  flex: none;
}

.titlebar svg [fill],
.ime svg [fill],
.monitor svg [fill],
.arrow [fill],
.ghost [fill] {
  stroke: none;
}

.caret {
  width: 5px;
  height: 3px;
  background: #888;
  clip-path: polygon(0 0, 100% 0, 50% 100%);
  flex: none;
}

.caret.pale {
  background: #bbb;
}

.off {
  color: #b4b4b4;
}

.off svg {
  stroke: #b4b4b4;
}

/* title bar */
.titlebar {
  height: 30px;
  flex: none;
  display: flex;
  background: #3e414d;
}

.wps-tab {
  width: 74px;
  gap: 4px;
  padding-right: 14px;
  background: #486698;
  color: #fff;
}

.doc-tab {
  display: flex;
  align-items: center;
  gap: 5px;
  width: 250px;
  margin-left: 3px;
  padding: 2px 13px 0 11px;
  background: #e8e8e8;
  color: #e5703e;
}

.unsaved {
  width: 6px;
  height: 6px;
  margin-left: auto;
  border-radius: 50%;
  background: #e8a05c;
}

.new-tab {
  margin-left: 17px;
}

.title-tools {
  margin-left: auto;
  display: flex;
  align-items: center;
  padding-right: 8px;
}

.title-tools svg {
  stroke: #85868f;
}

.title-tools > button {
  width: 45px;
}

.badge {
  width: 22px;
  height: 16px;
  line-height: 16px;
  padding-left: 6px;
  margin-right: 4px;
  color: #444;
  border-radius: 2px;
  background: linear-gradient(90deg, #b5b6bb 17px, #3e414d 17px 18px, #b5b6bb 18px 19px, #3e414d 19px 20px, #b5b6bb 20px 21px, #3e414d 21px);
}

.t-sep {
  width: 1px;
  height: 20px;
  background: #5b5d68;
}

.title-tools > .user {
  width: 74px;
  gap: 10px;
  padding-right: 6px;
  color: #9a9ba2;
}

.title-tools > .win {
  width: 12px;
  margin-left: 19px;
}

.title-tools > .t-sep + .win {
  margin-left: 26px;
}

/* menu bar */
.menubar {
  height: 39px;
  flex: none;
  display: flex;
  align-items: center;
  padding-top: 2px;
  border-bottom: 1px solid #d6d6d6;
  color: #222;
}

.file-btn {
  gap: 6px;
  padding-left: 16px;
}

.chev {
  stroke: #999;
  margin-left: 2px;
}

.m-sep {
  width: 1px;
  height: 24px;
  margin: 0 4px 0 9px;
  background: #cfcfcf;
}

.quick {
  display: flex;
  align-items: center;
}

.quick button {
  width: 25px;
  height: 24px;
}

.quick .caret {
  margin-right: 4px;
}

.tabs {
  display: flex;
  margin-left: 8px;
}

.tabs button {
  padding: 0 13px;
  height: 20px;
}

.tabs .wide {
  padding: 0 13px 0 16px;
}

.tabs .active {
  width: 44px;
  padding: 0;
  margin-right: 3px;
  border-radius: 10px;
  background: #e57848;
  color: #fff;
  font-weight: bold;
}

.search {
  margin-left: 15px;
  gap: 1px;
}

.menu-right {
  margin-left: auto;
  display: flex;
  align-items: center;
}

.menu-right button {
  width: 26px;
}

.menu-right .comment {
  width: auto;
  gap: 3px;
}

.m-sep.short {
  height: 20px;
}

.menu-right button:last-child {
  margin-right: 9px;
}

/* ribbon */
.ribbon {
  height: 69px;
  flex: none;
  display: flex;
  border-bottom: 1px solid #cfcfcf;
  color: #222;
}

.group {
  display: flex;
  gap: 12px;
  padding: 0 9px 0 10px;
  margin: 4px 0 2px;
  border-right: 1px solid #cdcdcd;
  position: relative;
}

.group.first {
  padding-left: 13px;
}

.group.roomy {
  padding-right: 11px;
}

.big {
  flex-direction: column;
  justify-content: flex-start;
  gap: 3px;
  padding-top: 5px;
}

.big span {
  display: flex;
  align-items: center;
  gap: 3px;
}

.stack {
  padding-top: 2px;
  display: flex;
  flex-direction: column;
}

.stack button {
  height: 26px;
  gap: 4px;
  justify-content: flex-start;
}

.group .o {
  stroke: #c9790e;
  fill: #e6dccd;
}

.group .l {
  stroke: #c9790e;
}

.group .g {
  stroke: #999;
}

.font-group,
.para-group {
  flex-direction: column;
  gap: 0;
  padding: 1px 4px 0 5px;
}

.tool-row {
  display: flex;
  align-items: center;
  height: 26px;
}

.t-btn {
  width: 25px;
  height: 24px;
}

.t-btn.apart {
  margin-left: 2px;
}

.t-btn svg {
  stroke: #a9a9a9;
}

.t-btn.dark svg {
  stroke: #333;
}

.tool-row .caret {
  margin-right: 5px;
}

.font-name,
.font-size {
  appearance: none;
  width: 97px;
  height: 24px;
  padding: 0 4px;
  border: 1px solid #adadad;
  border-radius: 4px 0 0 4px;
  background: #ededed url("data:image/svg+xml,%3Csvg xmlns='http://www.w3.org/2000/svg' width='5' height='3'%3E%3Cpath d='M0 0h5L2.500 3z' fill='%23bbb'/%3E%3C/svg%3E") no-repeat right 4px center;
}

.font-size {
  width: 69px;
  margin-left: -1px;
  margin-right: 2px;
  border-radius: 0 4px 4px 0;
}

.corner {
  position: absolute;
  right: 5px;
  bottom: 2px;
  width: 5px;
  height: 5px;
  border: 1px solid #bbb;
  border-width: 0 1px 1px 0;
}

/* workspace */
.workspace {
  flex: 1;
  min-height: 0;
  display: flex;
}

.slides {
  width: 269px;
  flex: none;
  display: flex;
  flex-direction: column;
  padding: 0 3px 4px 7px;
  background: #d8d8d8;
  border-right: 1px solid #c6c6c6;
}

.slides-head {
  height: 36px;
  flex: none;
  padding-top: 5px;
  display: flex;
  align-items: center;
}

.slides-head svg {
  stroke: #888;
}

.collapse {
  margin-right: 74px;
}

.current {
  margin-left: 13px;
  width: 56px;
  height: 20px;
  border-radius: 10px;
  background: #999;
  color: #fff;
}

.slide-list {
  flex: 1;
  margin: 0;
  padding: 7px 9px;
  list-style: none;
  background: #e8e8e8;
}

.slide-list li {
  display: flex;
  gap: 5px;
}

.slide-list b {
  width: 9px;
  margin-top: 4px;
  text-align: right;
  color: #f4733d;
}

.gradient {
  background: linear-gradient(180deg, #a8d18e 0%, #b3d1eb 61%, #b3d1eb 82%, #cfe1f3 100%);
}

.thumb {
  flex: 1;
  height: 128px;
  padding-top: 47px;
  border: 2px solid #f4733d;
  border-radius: 2px;
  text-align: center;
  font-size: 14px;
  color: #000;
}

.editor {
  flex: 1;
  min-width: 0;
  display: flex;
  flex-direction: column;
}

.stage-row {
  flex: 1;
  min-height: 0;
  display: flex;
}

.stage {
  flex: 1;
  display: flex;
  align-items: center;
  justify-content: center;
  padding: 0 16px;
}

.slide {
  width: 100%;
  aspect-ratio: 16 / 9;
  padding-top: 271px;
  color: #000;
  text-align: center;
  box-shadow: 0 1px 7px 2px rgba(0, 0, 0, 0.35);
}

.slide h1 {
  margin: 0;
  font-size: 80px;
  font-weight: normal;
  line-height: 104px;
}

.slide p {
  width: 75%;
  height: 172px;
  margin: 21px auto 0;
  border: 1px dashed #8fa9bf;
  font-size: 32px;
  line-height: 40px;
}

.scrollbar {
  width: 15px;
  display: flex;
  flex-direction: column;
  justify-content: space-between;
  align-items: center;
  padding: 13px 0 60px;
  background: #cfcfcf;
}

.scrollbar i {
  width: 7px;
  height: 4px;
  background: #777;
}

.scrollbar .up {
  clip-path: polygon(50% 0, 100% 100%, 0 100%);
}

.scrollbar .down {
  clip-path: polygon(0 0, 100% 0, 50% 100%);
}

.notes {
  height: 31px;
  flex: none;
  display: flex;
  align-items: center;
  gap: 8px;
  padding: 0 0 3px 8px;
  border-top: 1px solid #c6c6c6;
  font-size: 13px;
}

/* object properties */
.props {
  width: 306px;
  flex: none;
  display: flex;
  flex-direction: column;
  background: #e4e4e4;
}

.props-head {
  display: flex;
  align-items: center;
  justify-content: space-between;
  padding: 6px 8px 0 9px;
}

.props-head span {
  display: flex;
  align-items: center;
  gap: 4px;
}

.props-head svg {
  stroke: #888;
}

.props-tabs {
  margin: 8px 10px 0;
  border-bottom: 1px solid #d0d0d0;
  display: flex;
}

.props-tabs button {
  flex-direction: column;
  gap: 5px;
  width: 32px;
  padding-bottom: 2px;
  border-bottom: 2px solid #e5703e;
  margin-bottom: -1px;
  color: #e5703e;
}

.props-body {
  flex: 1;
  padding: 19px 17px 0 24px;
}

.row {
  display: flex;
  align-items: center;
  justify-content: space-between;
}

.sub {
  padding-left: 10px;
}

.head-row {
  margin-left: -12px;
}

.head-row h2 {
  display: flex;
  align-items: center;
  gap: 6px;
  margin: 0;
  font-size: 12px;
  font-weight: bold;
  color: #e5703e;
}

.head-row h2 i {
  width: 7px;
  height: 7px;
  background: #e5703e;
  clip-path: polygon(100% 0, 100% 100%, 0 100%);
}

.swatch {
  justify-content: space-between;
  padding: 0 4px 0 2px;
  border: 1px solid #bdbdbd;
  border-radius: 4px;
  background: #fff;
}

.preset {
  width: 110px;
  height: 24px;
}

.preset span {
  width: 92px;
  height: 19px;
}

.color {
  width: 71px;
  height: 20px;
}

.color span {
  width: 55px;
  height: 14px;
  background: #a8d18e;
}

.swatch .caret {
  background: #555;
}

.choices {
  padding: 9px 0 0 1px;
}

.choices label {
  display: flex;
  align-items: center;
  height: 25px;
}

.choices input {
  appearance: none;
  width: 14px;
  height: 14px;
  margin: 0 4px 0 0;
  border: 1px solid #8e8e8e;
  background: #e6e6e6;
}

.choices input[type="radio"] {
  border-radius: 50%;
}

.choices input[type="radio"]:checked {
  background: radial-gradient(circle, #b06a05 4px, #e6e6e6 4px);
}

.choices .off input {
  border-color: #c4c4c4;
}

.style-row {
  margin-top: 31px;
}

.styles {
  display: flex;
  gap: 6px;
}

.styles button {
  width: 20px;
  height: 20px;
  border: 1px solid #bbb;
  box-shadow: inset 0 0 0 1px #ddd;
}

.linear {
  background: linear-gradient(135deg, #e8e8e8, #999);
}

.radial {
  background: radial-gradient(#e0e0e0, #999);
}

.rect {
  background: radial-gradient(closest-side, #ddd, #8d8d8d);
}

.path {
  background: conic-gradient(from -35deg at 50% 55%, #8a8a8a 0%, #888 20%, #ccc 60%, #b8b8b8 99%, #8a8a8a 100%);
}

.angle-row {
  margin-top: 14px;
}

.angle {
  display: flex;
  align-items: center;
  gap: 9px;
}

.dial {
  width: 25px;
  height: 25px;
  border: 1px solid #555;
  border-radius: 50%;
  background: radial-gradient(circle at 18px 12px, #eee 1px, #999 2px 3px, transparent 3px), #f2f2f2;
  box-shadow: 1px 1px 2px rgba(0, 0, 0, 0.4);
}

.spin {
  display: flex;
  width: 90px;
  height: 23px;
  border: 1px solid #bdbdbd;
  border-radius: 4px;
  background: #fff;
}

.spin button {
  width: 22px;
  font-size: 16px;
}

.spin input {
  flex: 1;
  min-width: 0;
  padding: 0 3px;
  border: 1px solid #bdbdbd;
  border-width: 0 1px;
  background: none;
}

.stops-row {
  margin-top: 9px;
}

.stops {
  position: relative;
  width: 176px;
  height: 28px;
  margin: 0 14px 0 9px;
}

.bar {
  height: 17px;
  border: 1px solid #bbb;
  background: linear-gradient(90deg, #a8d18e 0%, #b3d1eb 61%, #b3d1eb 82%, #c9def2 100%);
}

.stop {
  position: absolute;
  top: 11px;
  transform: translateX(-50%);
}

.stop.on {
  top: 8px;
}

.stop-btn {
  width: 30px;
  height: 30px;
  background: #fff;
  border: 1px solid #bdbdbd;
}

.stop-btn + .stop-btn {
  margin-left: 6px;
}

.color-row {
  margin-top: 7px;
}

.slide-row {
  height: 36px;
}

.color-row + .slide-row {
  margin-top: 4px;
}

.slider {
  display: flex;
  align-items: center;
  gap: 4px;
}

.slider button {
  width: 14px;
  height: 14px;
  border: 1px solid #aaa;
  border-radius: 50%;
  background: #f4f4f4;
  line-height: 12px;
  font-size: 14px;
}

.slider button:last-child {
  margin-right: 2px;
}

.track {
  width: 84px;
  height: 28px;
}

.track output {
  display: block;
  height: 13px;
  line-height: 13px;
  color: #666;
}

.track input {
  appearance: none;
  display: block;
  width: 88px;
  height: 8px;
  margin: 0 0 0 -2px;
  background: linear-gradient(#bcbcc2, #bcbcc2) no-repeat 2px 0 / 84px 2px;
}

.track.filled input {
  background: linear-gradient(90deg, #d57839 70%, #bcbcc2 70%) no-repeat 2px 0 / 84px 2px;
}

.track input::-webkit-slider-thumb {
  appearance: none;
  width: 8px;
  height: 8px;
  background: #e58b54;
  clip-path: polygon(50% 0, 100% 85%, 0 85%);
}

.rotate {
  padding-top: 5px;
}

.props-foot {
  display: flex;
  align-items: center;
  gap: 6px;
  padding: 0 10px 11px;
}

.props-foot button {
  width: 58px;
  height: 27px;
  border: 1px solid #b8b8b8;
  background: #f8f8f8;
}

.props-foot a {
  color: #5a7fd0;
  text-decoration: none;
}

/* side strip */
.strip {
  width: 36px;
  flex: none;
  display: flex;
  flex-direction: column;
  align-items: center;
  gap: 12px;
  padding-top: 10px;
  background: #d8d8d8;
}

.strip button {
  width: 24px;
  height: 24px;
  border-radius: 4px;
}

.strip .grip {
  stroke: #999;
  margin-bottom: 4px;
}

.strip .on {
  background: #ababab;
}

.strip .soft svg {
  stroke: #888;
}

.strip .last {
  margin-top: 13px;
}

/* status bar */
.status {
  height: 35px;
  flex: none;
  display: flex;
  align-items: center;
  border-top: 1px solid #cccccc;
  color: #666;
}

.cell {
  height: 24px;
  line-height: 24px;
  padding: 0 14px 0 10px;
  border-right: 1px solid #d4d4d4;
}

.views {
  margin-left: auto;
  margin-right: 12px;
  display: flex;
  align-items: center;
  gap: 3px;
}

.views button {
  width: 24px;
  height: 24px;
}

.views .on {
  background: #c4c4c4;
  border-radius: 4px;
}

.views .play {
  width: 32px;
  margin-left: 10px;
  margin-right: 4px;
  background: #ef8a5c;
}

.views .play svg {
  fill: #fff;
  stroke: none;
}

.zoom {
  margin-left: 12px;
}

.zoom-range {
  appearance: none;
  width: 134px;
  height: 12px;
  margin: 0 5px;
  background: linear-gradient(#777, #777) no-repeat center / 100% 1px;
}

.zoom-range::-webkit-slider-thumb {
  appearance: none;
  width: 12px;
  height: 12px;
  border: 2px solid #777;
  border-radius: 50%;
  background: #e8e8e8;
}

/* floating windows */
.ime {
  position: absolute;
  right: 39px;
  bottom: 104px;
  width: 144px;
  height: 26px;
  padding: 0 5px 0 28px;
  display: flex;
  align-items: center;
  justify-content: space-between;
  border: 1px solid #a9c8ee;
  background: #fff;
}

.ime .logo {
  position: absolute;
  left: -9px;
  top: -6px;
}

.ime span {
  color: #006fe0;
  font-size: 14px;
  font-weight: bold;
}

.monitor {
  position: absolute;
  right: 0;
  top: 446px;
  width: 44px;
  height: 130px;
  padding-top: 37px;
  border-radius: 10px 0 0 10px;
  background: rgba(110, 113, 122, 0.6);
  color: #fff;
}

.shield {
  position: absolute;
  left: 15px;
  top: 6px;
}

.count {
  position: absolute;
  left: 15px;
  top: 6px;
  width: 14px;
  text-align: center;
}

.load {
  padding-left: 8px;
  font-size: 9px;
  line-height: 16px;
  white-space: nowrap;
}

.load b {
  font-size: 16px;
}

.load-bar {
  width: 28px;
  height: 4px;
  margin: 1px 0 12px 8px;
  border-radius: 2px;
  background: linear-gradient(90deg, #27bdb0, #a3c04a 40%, #f0a01c 75%, #555 75%);
}

.net {
  height: 28px;
  padding-left: 16px;
  line-height: 14px;
  position: relative;
}

.net b,
.net span {
  display: block;
  font-weight: normal;
}

.net span {
  font-size: 9px;
  line-height: 10px;
  color: #ddd;
}

.net::before {
  content: "↑";
  position: absolute;
  left: 4px;
  top: 5px;
  color: #1aa3ff;
}

.net.down::before {
  content: "↓";
  color: #10b562;
}

.arrow {
  position: absolute;
  filter: drop-shadow(2px 3px 2px rgba(0, 0, 0, 0.4));
}

.arrow.left {
  right: 315px;
  top: 525px;
}

.arrow.right {
  right: 14px;
  top: 547px;
}

.banner {
  position: absolute;
  right: 2px;
  bottom: 6px;
  height: 113px;
  display: flex;
  gap: 14px;
  padding: 0 8px 0 11px;
  background: rgba(255, 255, 255, 0.55);
}

.banner-text {
  width: 251px;
  white-space: nowrap;
}

.banner-text strong {
  display: block;
  font-size: 50px;
  line-height: 64px;
  color: #fe2a2a;
}

.banner-text span {
  display: block;
  font: bold 37px/44px "Liberation Serif", serif;
  color: #2579ff;
}

.tag {
  position: relative;
  width: 189px;
  text-align: center;
}

/* multiply lets the bars below show through the blue */
.tag::before {
  content: "";
  position: absolute;
  inset: 0;
  border-radius: 28px;
  background: #287fff;
  mix-blend-mode: multiply;
}

.tag b {
  position: relative;
  display: block;
  font: bold 92px/103px "Noto Sans CJK SC", sans-serif;
  color: #fafafa;
}

.ghost {
  position: absolute;
  left: 40px;
  bottom: 0;
  display: flex;
  align-items: center;
  text-align: left;
  font-size: 20px;
  font-weight: bold;
  line-height: 20px;
  color: #1c6ae6;
}

.ghost p {
  margin: 0;
  white-space: nowrap;
}

.ghost small {
  font-size: 15px;
}
```
